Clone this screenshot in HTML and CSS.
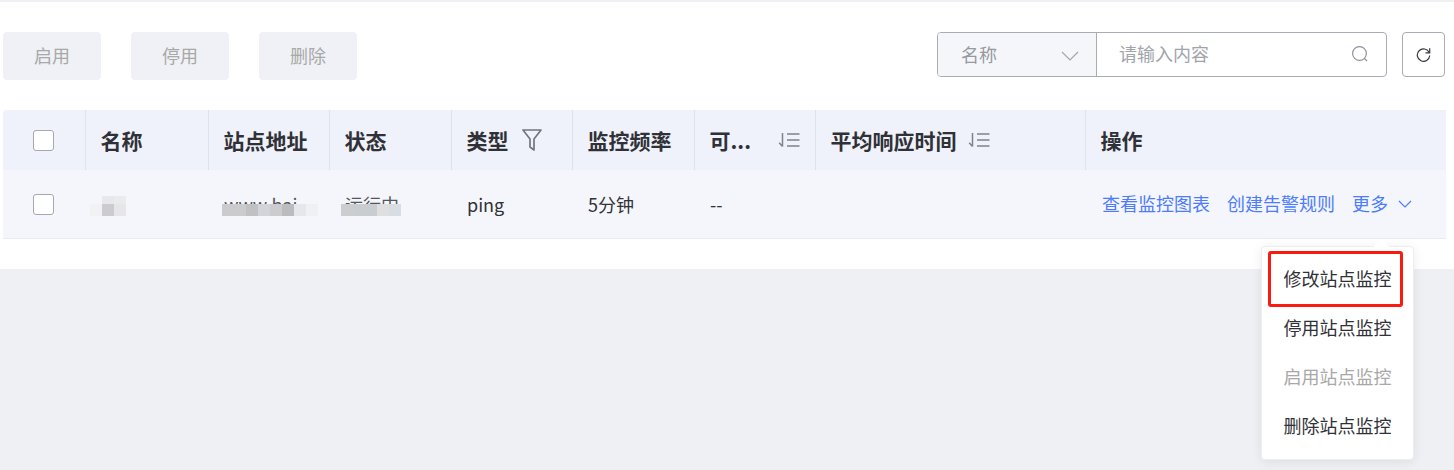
FILE: index.html
```html
<!DOCTYPE html>
<html lang="zh-CN">
<head>
    <meta charset="UTF-8">
    <meta name="viewport" content="width=device-width, initial-scale=1.0">
    <title>站点监控</title>
    <link rel="stylesheet" href="styles.css">
</head>
<body>
    <div class="panel">
        <div class="toolbar">
            <div class="actions">
                <button class="btn">启用</button>
                <button class="btn">停用</button>
                <button class="btn">删除</button>
            </div>
            <div class="search">
                <div class="search-group">
                    <div class="search-select">
                        <span>名称</span>
                        <svg class="chevron" width="18" height="10" viewBox="0 0 18 10"><path d="M1 1l8 8 8-8" fill="none" stroke="#a3a6ad" stroke-width="1.2"/></svg>
                    </div>
                    <div class="search-input">
                        <span>请输入内容</span>
                        <svg class="search-icon" width="18" height="18" viewBox="0 0 18 18"><circle cx="8.5" cy="8.5" r="6.9" fill="none" stroke="#8f9299" stroke-width="1.2"/><path d="M13.5 13.5l2.5 2.5" stroke="#8f9299" stroke-width="1.2"/></svg>
                    </div>
                </div>
                <button class="refresh">
                    <svg width="15" height="15" viewBox="0 0 14 14"><path d="M12.3 5.2A5.8 5.8 0 1 0 12.8 8" fill="none" stroke="#33353b" stroke-width="1.1"/><path d="M12.8 1.2v4.2H8.9" fill="none" stroke="#33353b" stroke-width="1.1"/></svg>
                </button>
            </div>
        </div>

        <table class="grid">
            <thead>
                <tr>
                    <th class="col-check"><span class="checkbox"></span></th>
                    <th class="col-name">名称</th>
                    <th class="col-url">站点地址</th>
                    <th class="col-state">状态</th>
                    <th class="col-type">
                        <span class="th-inner">类型
                            <svg width="20" height="23" viewBox="0 0 20 23"><path d="M1 1h18l-7 9v11l-4-3v-8z" fill="none" stroke="#73767e" stroke-width="1.7" stroke-linejoin="round"/></svg>
                        </span>
                    </th>
                    <th class="col-freq">监控频率</th>
                    <th class="col-avail">
                        <span class="th-inner spread">可...
                            <svg width="22" height="16" viewBox="0 0 22 16"><use href="#sort-icon"/></svg>
                        </span>
                    </th>
                    <th class="col-resp">
                        <span class="th-inner tight">平均响应时间
                            <svg width="22" height="16" viewBox="0 0 22 16"><use href="#sort-icon"/></svg>
                        </span>
                    </th>
                    <th class="col-ops">操作</th>
                </tr>
            </thead>
            <tbody>
                <tr>
                    <td><span class="checkbox"></span></td>
                    <td class="blur-cell"><span class="mosaic mosaic-name"></span></td>
                    <td class="blur-cell">www.bai<span class="mosaic mosaic-url"></span></td>
                    <td class="blur-cell">运行中<span class="mosaic mosaic-state"></span></td>
                    <td>ping</td>
                    <td>5分钟</td>
                    <td>--</td>
                    <td></td>
                    <td class="ops-cell">
                        <div class="ops">
                            <a>查看监控图表</a>
                            <a>创建告警规则</a>
                            <a class="more">更多
                                <svg width="14" height="8" viewBox="0 0 14 8"><path d="M1 1l6 6 6-6" fill="none" stroke="#4d7cfe" stroke-width="1.2"/></svg>
                            </a>
                        </div>
                    </td>
                </tr>
            </tbody>
        </table>
    </div>

    <div class="menu">
        <div class="menu-item">修改站点监控</div>
        <div class="menu-item">停用站点监控</div>
        <div class="menu-item disabled">启用站点监控</div>
        <div class="menu-item">删除站点监控</div>
    </div>
    <div class="highlight"></div>

    <svg width="0" height="0" class="defs">
        <symbol id="sort-icon" viewBox="0 0 22 16">
            <path d="M4.5 1v13.5M1.2 10.8l3.3 3.7" fill="none" stroke="#7f828b" stroke-width="1.5"/>
            <path d="M9 2h12.5M9 8h12.5M9 14h12.5" fill="none" stroke="#7f828b" stroke-width="1.5"/>
        </symbol>
    </svg>
</body>
</html>
```

FILE: styles.css
```css
* {
    box-sizing: border-box;
    margin: 0;
    padding: 0;
}

body {
    font-family: "Noto Sans CJK SC", "Noto Sans", sans-serif;
    font-size: 18px;
    color: #303136;
    background: #eff0f4;
    height: 470px;
    overflow: hidden;
    position: relative;
    padding-top: 2px;
}

.panel {
    background: white;
    height: 267px;
    padding: 30px 8px 0 3px;
}

.toolbar {
    display: flex;
    justify-content: space-between;
    height: 78px;
}

.actions {
    display: flex;
    gap: 30px;
}

.btn {
    width: 98px;
    height: 48px;
    background: #f0f1f6;
    color: #a8a8a8;
    border: none;
    border-radius: 4px;
    font: inherit;
    padding-bottom: 2px;
}

.search {
    display: flex;
    gap: 15px;
    margin-right: 1px;
}

.search-group {
    display: flex;
    width: 450px;
    height: 45px;
    border: 1px solid #a9acb5;
    border-radius: 4px;
    overflow: hidden;
}

.search-select {
    width: 159px;
    background: #f5f6fa;
    border-right: 1px solid #a9acb5;
    color: #97999f;
    display: flex;
    align-items: center;
    justify-content: space-between;
    padding: 0 17px 1px 23px;
}

.chevron {
    margin-top: 3px;
}

.search-input {
    flex: 1;
    color: #a2a4aa;
    display: flex;
    align-items: center;
    justify-content: space-between;
    padding: 0 17px 3px 22px;
}

.search-icon {
    margin-top: 2px;
}

.refresh {
    width: 43px;
    height: 45px;
    background: white;
    border: 1px solid #a9acb5;
    border-radius: 4px;
    display: flex;
    align-items: center;
    justify-content: center;
}

.grid {
    width: 1443px;
    border-collapse: collapse;
    table-layout: fixed;
}

.grid th {
    height: 60px;
    background: #eff2fb;
    font-size: 21px;
    font-weight: 700;
    text-align: left;
    padding: 0 15px;
    border-left: 1px solid #dfe2ec;
    white-space: nowrap;
}

.grid th:first-child {
    border-left: none;
    border-radius: 4px 0 0 0;
}

.grid td {
    height: 68px;
    background: #f5f6fb;
    padding: 0 16px;
    border-bottom: 1px solid #e9eaf0;
    white-space: nowrap;
}

.col-check { width: 82px; }
.col-name { width: 123px; }
.col-url { width: 121px; }
.col-state { width: 122px; }
.col-type { width: 121px; }
.col-freq { width: 122px; }
.col-avail { width: 121px; }
.col-resp { width: 270px; }

.grid th.col-check {
    padding: 0 0 0 30px;
}

.grid td:first-child {
    padding: 2px 0 0 30px;
}

.checkbox {
    display: block;
    width: 21px;
    height: 21px;
    background: white;
    border: 1px solid #a6a9b3;
    border-radius: 3px;
}

.th-inner {
    display: flex;
    align-items: center;
    gap: 13px;
}

.th-inner.tight {
    gap: 11px;
}

.th-inner.spread {
    justify-content: space-between;
}

.blur-cell {
    position: relative;
    overflow: hidden;
    color: #55565c;
}

.mosaic {
    position: absolute;
    bottom: 22px;
    height: 12px;
}

/* pixelated blur over the hidden values */
.mosaic-name {
    left: 5px;
    width: 36px;
    background: linear-gradient(to right, #f2f2f4 33.3%, #ccccd0 33.3%, #ccccd0 66.6%, #e6e6e9 66.6%);
}

.mosaic-name::before {
    content: "";
    position: absolute;
    left: 12px;
    top: -8px;
    width: 24px;
    height: 8px;
    background: linear-gradient(to right, #e7e8ec 50%, #eaebef 50%);
}

.mosaic-url {
    left: 14px;
    width: 96px;
    background: linear-gradient(to right, #cbcbce 25%, #c1c1c4 25%, #c1c1c4 37.5%, #d1d4d9 37.5%, #d1d4d9 50%, #cccccf 50%, #cccccf 62.5%, #bcbcbf 62.5%, #bcbcbf 75%, #e5e7eb 75%, #e5e7eb 87.5%, #eef0f2 87.5%);
}

.mosaic-state {
    left: 12px;
    width: 60px;
    background: linear-gradient(to right, #cdcdcf 20%, #cacdd0 20%, #cacdd0 60%, #dfdfdf 60%, #dfdfdf 80%, #d8dde3 80%);
}

.grid td.ops-cell {
    padding: 0 0 2px 17px;
}

.ops {
    display: flex;
    align-items: center;
    gap: 17px;
}

.ops a {
    color: #4d7cfe;
}

.more {
    display: flex;
    align-items: center;
    gap: 10px;
}

.more svg {
    margin-top: 3px;
}

.menu {
    position: absolute;
    left: 1261px;
    top: 246px;
    width: 153px;
    height: 214px;
    background: white;
    border-radius: 4px;
    border: 1px solid #eceef2;
    box-shadow: 0 2px 12px rgba(0,0,0,0.08);
    padding: 7px 0;
}

.menu::before {
    content: "";
    position: absolute;
    left: 114px;
    top: -6px;
    width: 11px;
    height: 11px;
    background: white;
    transform: rotate(45deg);
}

.menu-item {
    height: 49px;
    line-height: 49px;
    text-align: center;
    position: relative;
}

.menu-item.disabled {
    color: #a8a8a8;
}

.highlight {
    position: absolute;
    left: 1268px;
    top: 251px;
    width: 135px;
    height: 56px;
    border: 3px solid #fb1a10;
    border-radius: 3px;
}

.defs {
    position: absolute;
}
```
